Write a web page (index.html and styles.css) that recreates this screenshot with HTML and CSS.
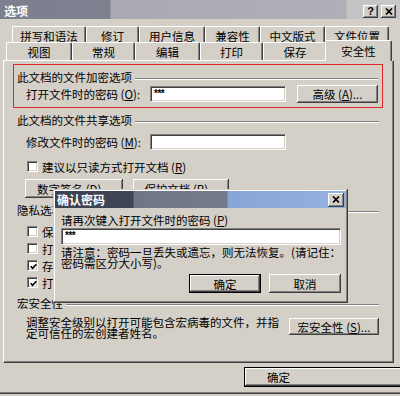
FILE: index.html
```html
<!DOCTYPE html>
<html lang="zh-CN">
<head>
<meta charset="utf-8">
<title>选项</title>
<link rel="stylesheet" href="styles.css">
</head>
<body>
<div class="window">
  <div class="titlebar">
    <span class="title">选项</span>
    <div class="tb-btns">
      <span class="tbtn help">?</span>
      <span class="tbtn"><svg width="8" height="7" viewBox="0 0 8 7"><path d="M1 0.5 L7 6.5 M7 0.5 L1 6.5" stroke="#000" stroke-width="1.7" fill="none"/></svg></span>
    </div>
  </div>

  <div class="tabs">
    <div class="tabrow back">
      <div class="tab w74">拼写和语法</div>
      <div class="tab w53">修订</div>
      <div class="tab w66">用户信息</div>
      <div class="tab w55">兼容性</div>
      <div class="tab w65">中文版式</div>
      <div class="tab w64">文件位置</div>
    </div>
    <div class="tabrow front">
      <div class="tab w66">视图</div>
      <div class="tab w63">常规</div>
      <div class="tab w65">编辑</div>
      <div class="tab w63">打印</div>
      <div class="tab w64">保存</div>
      <div class="tab w63 sel">安全性</div>
    </div>
  </div>

  <div class="panel">
    <div class="redbox">
      <div class="ghead"><span>此文档的文件加密选项</span><i class="groove"></i></div>
      <div class="field-row open">
        <span class="pw-label">打开文件时的密码 (<u>O</u>):</span>
        <div class="input">***</div>
        <button class="btn adv">高级 (<u>A</u>)...</button>
      </div>
    </div>

    <div class="section">
      <div class="ghead s2"><span>此文档的文件共享选项</span><i class="groove"></i></div>
      <div class="field-row modify">
        <span class="pw-label">修改文件时的密码 (<u>M</u>):</span>
        <div class="input"></div>
      </div>
      <div class="check-row ro"><span class="cb"></span><span>建议以只读方式打开文档 (<u>R</u>)</span></div>
      <div class="btn-row">
        <button class="btn sig">数字签名 (<u>D</u>)...</button>
        <button class="btn prot">保护文档 (<u>P</u>)...</button>
      </div>

      <div class="ghead s3"><span>隐私选项</span><i class="groove"></i></div>
      <div class="privacy">
        <div class="check-row"><span class="cb"></span><span>保存时从文件属性中删除个人信息</span></div>
        <div class="check-row"><span class="cb"></span><span>打印、保存或发送包含修订的文件之前给出警告</span></div>
        <div class="check-row"><span class="cb"><svg width="7" height="7" viewBox="0 0 7 7"><path d="M0.6 3.2 L2.6 5.3 L6.4 1.2" stroke="#000" stroke-width="1.6" fill="none"/></svg></span><span>存储用于增强合并精确性的随机编号</span></div>
        <div class="check-row"><span class="cb"><svg width="7" height="7" viewBox="0 0 7 7"><path d="M0.6 3.2 L2.6 5.3 L6.4 1.2" stroke="#000" stroke-width="1.6" fill="none"/></svg></span><span>打开或保存时标记可见</span></div>
      </div>

      <div class="ghead s4"><span>宏安全性</span><i class="groove"></i></div>
      <div class="macro-row">
        <p class="macro-text">调整安全级别以打开可能包含宏病毒的文件，并指<br>定可信任的宏创建者姓名。</p>
        <button class="btn macro">宏安全性 (<u>S</u>)...</button>
      </div>
    </div>
  </div>

  <div class="footer">
    <button class="btn def ok">确定</button>
  </div>
  <div class="frame-bottom"></div>

  <div class="dialog">
    <div class="dlg-title">
      <span>确认密码</span>
      <span class="tbtn dlg-close"><svg width="8" height="7" viewBox="0 0 8 7"><path d="M1 0.5 L7 6.5 M7 0.5 L1 6.5" stroke="#000" stroke-width="1.7" fill="none"/></svg></span>
    </div>
    <div class="dlg-body">
      <div class="dlg-label">请再次键入打开文件时的密码 (<u>P</u>)</div>
      <div class="input dlg-input">***</div>
      <p class="dlg-note">请注意：密码一旦丢失或遗忘，则无法恢复。(请记住：<br>密码需区分大小写)。</p>
      <div class="dlg-btns">
        <button class="btn def">确定</button>
        <button class="btn">取消</button>
      </div>
    </div>
  </div>
</div>
</body>
</html>
```

FILE: styles.css
```css
* { box-sizing: border-box; }
html, body { margin: 0; padding: 0; }
body {
  width: 400px;
  height: 396px;
  overflow: hidden;
  background: #d4d0c8;
  font-family: "Noto Sans CJK SC", "Noto Sans", sans-serif;
  font-size: 11.5px;
  line-height: 14px;
  color: #000;
}
u { text-decoration: underline; }
p { margin: 0; }

.window {
  position: relative;
  width: 400px;
  height: 396px;
  display: flex;
  flex-direction: column;
}

/* title bar */
.titlebar {
  height: 19px;
  flex: none;
  display: flex;
  align-items: center;
  padding: 3px 4px 0 4px;
  background: linear-gradient(to right, #7b7f8e 0, #7d8190 110px, #a8a9b2 111px, #afafb7 346px, #c2c2c4 347px, #c8c8c8 100%);
}
.title { flex: 1; color: #fff; font-weight: bold; font-size: 12px; }
.tb-btns { display: flex; gap: 3px; }
.tbtn {
  width: 15px;
  height: 13px;
  background: #d4d0c8;
  box-shadow: inset -1px -1px #404040, inset 1px 1px #fff, inset -2px -2px #808080;
  display: flex;
  align-items: center;
  justify-content: center;
  color: #000;
  font: bold 11px/1 "Liberation Sans", sans-serif;
}

/* tabs */
.tabs { margin-top: 7px; position: relative; z-index: 2; flex: none; }
.tabrow { display: flex; align-items: flex-start; height: 18px; }
.tabrow.back { padding-left: 12px; }
.tabrow.front { padding-left: 6px; margin-top: -2px; }
.tab {
  height: 18px;
  flex: none;
  display: flex;
  align-items: center;
  justify-content: center;
  padding-top: 1px;
  background: #d4d0c8;
  border-top: 1px solid #fff;
  border-left: 1px solid #fff;
  border-right: 1px solid #404040;
  box-shadow: inset -1px 0 #808080;
  border-radius: 2px 2px 0 0;
}
.tab.sel { height: 21px; margin: -2px -2px 0 -2px; position: relative; z-index: 3; padding-top: 0; }
.w53 { width: 53px; } .w55 { width: 55px; } .w63 { width: 63px; } .w64 { width: 64px; }
.w65 { width: 65px; } .w66 { width: 66px; } .w74 { width: 74px; }
.tab.sel.w63 { width: 67px; }

/* panel */
.panel {
  flex: none;
  margin-left: 3px;
  width: 391px;
  height: 303px;
  border-top: 1px solid #fff;
  border-left: 1px solid #fff;
  border-right: 1px solid #404040;
  border-bottom: 1px solid #404040;
  box-shadow: inset -1px -1px #808080;
}
.redbox {
  margin: 3px 0 0 9px;
  width: 370px;
  border: 1px solid #e0282c;
  padding: 5px 4px 4px 3px;
}
.section { margin: 0 14px 0 13px; }

.ghead { display: flex; height: 14px; white-space: nowrap; }
.groove {
  flex: 1;
  height: 2px;
  margin: 8px 0 0 3px;
  border-top: 1px solid #808080;
  border-bottom: 1px solid #fff;
}
.ghead.s2 { margin-top: 5px; }
.ghead.s3 { margin-top: 5px; }
.ghead.s4 { margin-top: 7px; }

.field-row { display: flex; align-items: center; margin-left: 9px; }
.field-row.open { height: 18px; margin-top: 1px; }
.field-row.modify { height: 16px; margin-top: 7px; }
.pw-label { width: 124px; flex: none; white-space: nowrap; }
.input {
  width: 136px;
  height: 16px;
  background: #fff;
  border: 1px solid;
  border-color: #808080 #fff #fff #808080;
  box-shadow: inset 1px 1px #404040, inset -1px -1px #d4d0c8;
  padding-left: 3px;
  font: bold 10px/14px "Liberation Sans", sans-serif;
  letter-spacing: -0.5px;
}

.btn {
  font: inherit;
  line-height: 14px;
  color: #000;
  background: #d4d0c8;
  border: 0;
  padding: 0;
  margin: 0;
  display: flex;
  align-items: center;
  justify-content: center;
  white-space: nowrap;
  box-shadow: inset -1px -1px #404040, inset 1px 1px #fff, inset -2px -2px #808080;
}
.btn.def { border: 1px solid #000; }
.btn.adv { width: 81px; height: 18px; margin-left: auto; }

.check-row { display: flex; align-items: center; height: 13px; padding-left: 1px; gap: 4px; margin-left: 9px; white-space: nowrap; }
.check-row.ro { margin-top: 10px; }
.cb {
  width: 11px;
  height: 11px;
  flex: none;
  background: #fff;
  border: 1px solid;
  border-color: #808080 #fff #fff #808080;
  box-shadow: inset 1px 1px #404040, inset -1px -1px #d4d0c8;
  display: flex;
  align-items: center;
  justify-content: center;
}
.cb svg { margin: 1px 0 0 1px; }

.btn-row { display: flex; gap: 10px; margin: 6px 0 0 8px; }
.btn.sig { width: 98px; height: 19px; }
.btn.prot { width: 96px; height: 19px; }

.privacy { display: flex; flex-direction: column; gap: 4px; margin-top: 8px; }

.macro-row { display: flex; justify-content: space-between; align-items: flex-start; margin: 7px 0 0 9px; }
.macro-text { line-height: 11px; white-space: nowrap; }
.btn.macro { width: 90px; height: 17px; margin-top: 1px; }

/* footer */
.footer { flex: none; padding: 4px 0 0 244px; }
.btn.ok { width: 160px; height: 20px; justify-content: flex-start; padding-left: 22px; }
.frame-bottom { flex: none; margin-top: 5px; height: 2px; border-top: 1px solid #808080; border-bottom: 1px solid #404040; }

/* confirm dialog */
.dialog {
  position: absolute;
  left: 53px;
  top: 189px;
  width: 295px;
  height: 114px;
  z-index: 5;
  padding: 2px;
  background: #d4d0c8;
  box-shadow: inset -1px -1px #404040, inset 1px 1px #d4d0c8, inset -2px -2px #808080, inset 2px 2px #fff;
}
.dlg-title {
  height: 17px;
  display: flex;
  align-items: center;
  justify-content: space-between;
  padding: 0 2px 0 2px;
  color: #fff;
  font-weight: bold;
  font-size: 12px;
  background: linear-gradient(to right, #3d4253 0, #3f4455 78px, #6f7687 79px, #737a8b 172px, #88a6d5 173px, #93b2e0 100%);
}
.dlg-close { width: 16px; height: 14px; }
.dlg-body { padding: 5px 5px 0 6px; }
.dlg-label { height: 14px; white-space: nowrap; }
.input.dlg-input { width: 100%; height: 17px; margin-top: 1px; }
.dlg-note { margin-top: 2px; line-height: 11px; white-space: nowrap; }
.dlg-btns { display: flex; justify-content: flex-end; gap: 8px; margin-top: 5px; }
.dlg-btns .btn { width: 72px; height: 19px; }
```
